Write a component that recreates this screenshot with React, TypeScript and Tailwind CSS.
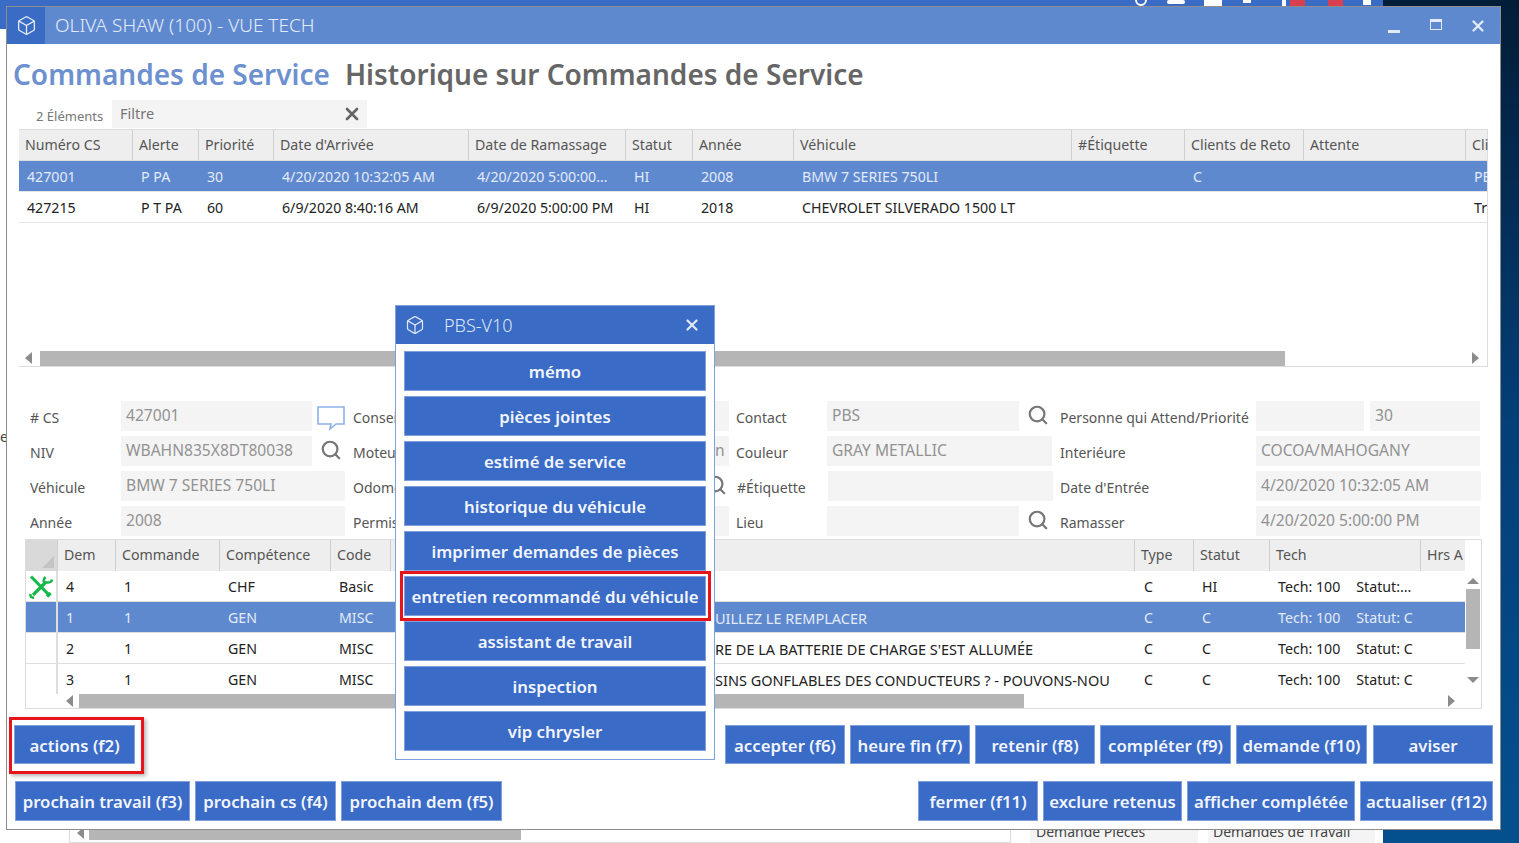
import { Box, Search, X } from "lucide-react";

const font = "font-['Noto_Sans','Liberation_Sans',sans-serif]";

const orderColumns = ["Numéro CS", "Alerte", "Priorité", "Date d'Arrivée", "Date de Ramassage", "Statut", "Année", "Véhicule", "#Étiquette", "Clients de Reto", "Attente", "Cli"];
const orders = [
  { selected: true, cells: ["427001", "P PA", "30", "4/20/2020 10:32:05 AM", "4/20/2020 5:00:00...", "HI", "2008", "BMW 7 SERIES 750LI", "", "C", "", "PE"] },
  { selected: false, cells: ["427215", "P T PA", "60", "6/9/2020 8:40:16 AM", "6/9/2020 5:00:00 PM", "HI", "2018", "CHEVROLET SILVERADO 1500 LT", "", "", "", "Tr"] },
];

const jobColumns = ["Dem", "Commande", "Compétence", "Code", "", "Type", "Statut", "Tech", "Hrs A"];
const jobs = [
  { dem: "4", skill: "CHF", code: "Basic", text: "", status: "HI", tail: "Statut:...", selected: false, tool: true },
  { dem: "1", skill: "GEN", code: "MISC", text: "UILLEZ LE REMPLACER", status: "C", tail: "Statut: C", selected: true, tool: false },
  { dem: "2", skill: "GEN", code: "MISC", text: "RE DE LA BATTERIE DE CHARGE S'EST ALLUMÉE", status: "C", tail: "Statut: C", selected: false, tool: false },
  { dem: "3", skill: "GEN", code: "MISC", text: "SINS GONFLABLES DES CONDUCTEURS ? - POUVONS-NOU", status: "C", tail: "Statut: C", selected: false, tool: false },
];

const menuItems = ["mémo", "pièces jointes", "estimé de service", "historique du véhicule", "imprimer demandes de pièces", "entretien recommandé du véhicule", "assistant de travail", "inspection", "vip chrysler"];

function Arrow({ dir }: { dir: "left" | "right" | "up" | "down" }) {
  const points = {
    left: "9,1 9,13 2,7",
    right: "3,1 3,13 10,7",
    up: "1,9 13,9 7,3",
    down: "1,4 13,4 7,10",
  }[dir];
  return (
    <svg width="14" height="14" viewBox="0 0 14 14" className="shrink-0">
      <polygon points={points} fill="#8c8c8c" />
    </svg>
  );
}

function Field({ value = "", className = "" }: { value?: string; className?: string }) {
  return (
    <div className={`h-[30px] shrink-0 overflow-hidden whitespace-nowrap bg-[#f4f4f4] pl-[5px] pt-[3px] text-[15.6px] leading-[22px] text-[#929292] ${className}`}>
      {value}
    </div>
  );
}

function Label({ text, className = "" }: { text: string; className?: string }) {
  return <div className={`shrink-0 overflow-hidden whitespace-nowrap pt-[6px] text-[14px] leading-[22px] text-[#555] ${className}`}>{text}</div>;
}

function Lens({ className = "" }: { className?: string }) {
  return <Search size={22} strokeWidth={2.4} className={`shrink-0 text-[#777] ${className}`} />;
}

function ActionButton({ label, className = "" }: { label: string; className?: string }) {
  return (
    <button className={`h-full shrink-0 overflow-hidden whitespace-nowrap border border-[#7fa0dd] bg-[#3a6bc7] pt-[2px] text-[16.8px] font-semibold text-[#f2f5fc] ${className}`}>
      {label}
    </button>
  );
}

function App() {
  return (
    <div className={`relative h-[843px] w-[1519px] overflow-hidden bg-white ${font}`}>
      {/* what sits behind the window */}
      <div className="absolute inset-y-0 right-0 w-[136px] bg-gradient-to-b from-[#021d38] via-[#033f78] to-[#04508f]" />
      <div className="absolute left-0 top-0 flex h-[29px] w-[1383px] items-start justify-end bg-[#3a6bc5] pr-[12px]">
        <div className="-mt-[6px] h-[12px] w-[12px] rounded-full border-2 border-white" />
        <div className="ml-[20px] h-[4px] w-[18px] rounded-[2px] bg-white" />
        <div className="ml-[19px] h-[6px] w-[18px] bg-white" />
        <div className="ml-[21px] h-[3px] w-[8px] bg-white" />
        <div className="ml-[31px] h-[6px] w-[4px] bg-white" />
        <div className="ml-[4px] h-[7px] w-[15px] bg-[#d8404f]" />
        <div className="ml-[23px] h-[7px] w-[15px] bg-[#d8404f]" />
        <div className="ml-[20px] h-[5px] w-[8px] bg-white" />
      </div>
      <div className="absolute left-0 top-[430px] text-[14px] leading-none text-[#444]">e</div>
      <div className="absolute left-[69px] top-[820px] flex h-[23px] w-[942px] items-end border border-[#dcdcdc] pb-[2px] pl-[5px]">
        <Arrow dir="left" />
        <div className="h-[10px] w-[432px] bg-[#b5b5b5]" />
      </div>
      <div className="absolute left-[1030px] top-[820px] h-[23px] w-[168px] overflow-hidden bg-[#f4f4f4] pl-[6px] pt-[1px] text-[14px] text-[#444]">Demande Pièces</div>
      <div className="absolute left-[1208px] top-[820px] h-[23px] w-[167px] overflow-hidden bg-[#f4f4f4] pl-[5px] pt-[1px] text-[14px] text-[#444]">Demandes de Travail</div>

      {/* main window */}
      <div className="absolute left-[7px] top-[7px] flex h-[822px] w-[1493px] flex-col bg-white shadow-[0_0_0_1px_#8d8d8d]">
        <div className="flex h-[37px] shrink-0 items-center bg-[#5f89cf] text-[#e4ebf8]">
          <div className="flex h-full w-[38px] items-center justify-center bg-[#3a6bc5]">
            <Box size={21} strokeWidth={1.5} />
          </div>
          <div className="ml-[10px] flex-1 text-[19px] font-light">OLIVA SHAW (100) - VUE TECH</div>
          <div className="mr-[30px] mt-[11px] h-[3px] w-[12px] bg-[#e4ebf8]" />
          <div className="mr-[27px] -mt-[3px] h-[11px] w-[12px] border border-t-[3px] border-[#e4ebf8]" />
          <X size={18} strokeWidth={3} className="mr-[13px]" />
        </div>

        <div className="flex h-[56px] shrink-0 items-center gap-[15px] pl-[6px] pt-[4px] text-[28px] font-semibold">
          <span className="text-[#6d90cf]">Commandes de Service</span>
          <span className="text-[#666]">Historique sur Commandes de Service</span>
        </div>

        <div className="flex h-[29px] shrink-0 items-stretch pl-[29px]">
          <div className="w-[76px] pt-[7px] text-[13px] leading-[18px] text-[#777]">2 Éléments</div>
          <div className="flex h-[28px] w-[255px] items-center justify-between bg-[#f4f4f4] pl-[8px] pr-[5px] text-[14.5px] text-[#777]">
            Filtre
            <X size={20} strokeWidth={3.2} className="text-[#666]" />
          </div>
        </div>

        {/* orders table */}
        <div className="ml-[12px] h-[238px] w-[1469px] shrink-0 border-b border-r border-[#dddddd]">
          <div className="grid h-[32px] grid-cols-[114px_66px_75px_195px_157px_67px_101px_278px_113px_119px_162px_22px] border-b border-t border-[#dcdcdc] bg-[#eeeeee]">
            {orderColumns.map((c) => (
              <div key={c} className="overflow-hidden whitespace-nowrap border-r border-[#cfcfcf] pl-[6px] text-[14.2px] leading-[30px] text-[#555] last:border-r-0">{c}</div>
            ))}
          </div>
          {orders.map((o) => (
            <div key={o.cells[0]} className={`grid h-[31px] grid-cols-[114px_66px_75px_195px_157px_67px_101px_278px_113px_119px_162px_22px] border-b border-[#e4e4e4] ${o.selected ? "bg-[#5f89cf] text-[#e4ebf8]" : "text-[#222]"}`}>
              {o.cells.map((c, i) => (
                <div key={i} className="overflow-hidden whitespace-nowrap pl-[8px] text-[14.2px] leading-[32px]">{c}</div>
              ))}
            </div>
          ))}
          <div className="mt-[127px] flex h-[16px] items-center pl-[4px] pr-[4px]">
            <Arrow dir="left" />
            <div className="ml-[3px] h-[15px] w-[1245px] bg-[#b5b5b5]" />
            <div className="flex-1" />
            <Arrow dir="right" />
          </div>
        </div>

        {/* detail form */}
        <div className="ml-[23px] mt-[34px] flex shrink-0 flex-col gap-[5px]">
          <div className="flex h-[30px]">
            <Label text="# CS" className="w-[91px]" />
            <Field value="427001" className="w-[191px]" />
            <svg width="28" height="26" viewBox="0 0 28 26" className="ml-[5px] mt-[4px] shrink-0"><path d="M1 2h26v17H19l-6 5 1-5H1z" fill="none" stroke="#8db0e6" strokeWidth="1.6" /></svg>
            <Label text="Conseiller" className="ml-[8px] w-[87px]" />
            <Field className="w-[289px]" />
            <Label text="Contact" className="ml-[7px] w-[91px]" />
            <Field value="PBS" className="w-[192px]" />
            <Lens className="ml-[8px] mt-[3px]" />
            <Label text="Personne qui Attend/Priorité" className="ml-[11px] w-[196px]" />
            <Field className="w-[108px]" />
            <Field value="30" className="ml-[6px] w-[110px]" />
          </div>
          <div className="flex h-[30px]">
            <Label text="NIV" className="w-[91px]" />
            <Field value="WBAHN835X8DT80038" className="w-[191px]" />
            <Lens className="ml-[8px] mt-[3px]" />
            <Label text="Moteur" className="ml-[11px] w-[87px]" />
            <Field value="in" className="w-[289px] pl-[271px]" />
            <Label text="Couleur" className="ml-[7px] w-[91px]" />
            <Field value="GRAY METALLIC" className="w-[225px]" />
            <Label text="Interiéure" className="ml-[8px] w-[196px]" />
            <Field value="COCOA/MAHOGANY" className="w-[224px]" />
          </div>
          <div className="flex h-[30px]">
            <Label text="Véhicule" className="w-[91px]" />
            <Field value="BMW 7 SERIES 750LI" className="w-[224px]" />
            <Label text="Odomètre" className="ml-[8px] w-[87px]" />
            <Field className="w-[270px]" />
            <Lens className="-ml-[5px] mt-[3px]" />
            <Label text="#Étiquette" className="ml-[10px] w-[91px]" />
            <Field className="w-[225px]" />
            <Label text="Date d'Entrée" className="ml-[7px] w-[196px]" />
            <Field value="4/20/2020 10:32:05 AM" className="w-[225px]" />
          </div>
          <div className="flex h-[30px]">
            <Label text="Année" className="w-[91px]" />
            <Field value="2008" className="w-[224px]" />
            <Label text="Permis" className="ml-[8px] w-[87px]" />
            <Field className="w-[289px]" />
            <Label text="Lieu" className="ml-[7px] w-[91px]" />
            <Field className="w-[192px]" />
            <Lens className="ml-[8px] mt-[3px]" />
            <Label text="Ramasser" className="ml-[11px] w-[196px]" />
            <Field value="4/20/2020 5:00:00 PM" className="w-[224px]" />
          </div>
        </div>

        {/* jobs table */}
        <div className="ml-[18px] mt-[3px] h-[170px] w-[1457px] shrink-0 border border-[#dcdcdc]">
          <div className="flex h-[154px]">
            <div className="w-[1439px] shrink-0 overflow-hidden">
              <div className="grid h-[31px] grid-cols-[32px_58px_104px_111px_60px_744px_59px_76px_151px_44px] bg-[#eeeeee]">
                <div className="relative border-r border-[#cfcfcf] bg-[#d9d9d9]">
                  <div className="absolute bottom-[3px] right-[3px] h-0 w-0 border-b-[12px] border-l-[12px] border-b-[#c4c4c4] border-l-transparent" />
                </div>
                {jobColumns.map((c, i) => (
                  <div key={i} className="overflow-hidden whitespace-nowrap border-r border-[#cfcfcf] pl-[6px] text-[14.2px] leading-[30px] text-[#555] last:border-r-0">{c}</div>
                ))}
              </div>
              {jobs.map((j) => (
                <div key={j.dem} className={`grid h-[31px] grid-cols-[32px_58px_104px_111px_60px_744px_59px_76px_229px] border-b border-[#dedede] text-[14.2px] leading-[32px] ${j.selected ? "bg-[#5f89cf] text-[#e4ebf8]" : "text-[#222]"}`}>
                  <div className="flex items-center justify-center border-r-2 border-[#dedede]">
                    {j.tool && (
                      <svg width="26" height="26" viewBox="0 0 26 26" fill="none" stroke="#17b84b">
                        {/* screwdriver, upper left to lower right */}
                        <path d="M3 2.500 21 21" strokeWidth="3.200" />
                        <path d="M19 22.500 22.500 19" strokeWidth="3.500" />
                        {/* wrench, lower left to upper right */}
                        <path d="M5 21 18 8" strokeWidth="3.200" />
                        <path d="M17.500 3c-2.500 2.500-2.500 5.500 .5 5.500s5.500 .5 6-3" strokeWidth="2.600" />
                        <path d="M2.500 20c-.5 2.500 1 4 3.500 3.500" strokeWidth="2.600" />
                      </svg>
                    )}
                  </div>
                  <div className="pl-[8px]">{j.dem}</div>
                  <div className="pl-[8px]">1</div>
                  <div className="pl-[8px]">{j.skill}</div>
                  <div className="pl-[8px]">{j.code}</div>
                  <div className="overflow-hidden whitespace-nowrap pl-[324px] text-[14.5px]">{j.text}</div>
                  <div className="pl-[9px]">C</div>
                  <div className="pl-[8px]">{j.status}</div>
                  <div className="flex gap-[16px] whitespace-nowrap pl-[8px]">
                    <span>Tech: 100</span>
                    <span>{j.tail}</span>
                  </div>
                </div>
              ))}
            </div>
            <div className="flex w-[16px] shrink-0 flex-col items-center pt-[35px]">
              <Arrow dir="up" />
              <div className="h-[60px] w-[14px] bg-[#b5b5b5]" />
              <div className="mt-[24px]"><Arrow dir="down" /></div>
            </div>
          </div>
          <div className="flex h-[14px] items-center pl-[38px] pr-[22px]">
            <Arrow dir="left" />
            <div className="ml-[1px] h-[14px] w-[945px] bg-[#b5b5b5]" />
            <div className="flex-1" />
            <Arrow dir="right" />
          </div>
        </div>

        {/* bottom buttons */}
        <div className="mt-[16px] flex h-[39px] shrink-0 justify-between pl-[7px] pr-[7px]">
          <div className="relative h-full">
            <ActionButton label="actions (f2)" className="w-[121px]" />
            <div className="absolute -bottom-[10px] -left-[5px] -right-[9px] -top-[8px] border-[3px] border-[#e8141c] shadow-[2px_2px_4px_rgba(0,0,0,0.3)]" />
          </div>
          <div className="flex gap-[5px]">
            <ActionButton label="accepter (f6)" className="w-[120px]" />
            <ActionButton label="heure fin (f7)" className="w-[120px]" />
            <ActionButton label="retenir (f8)" className="w-[120px]" />
            <ActionButton label="compléter (f9)" className="w-[131px]" />
            <ActionButton label="demande (f10)" className="w-[131px]" />
            <ActionButton label="aviser" className="ml-[1px] w-[120px]" />
          </div>
        </div>
        <div className="mt-[17px] flex h-[40px] shrink-0 justify-between pl-[8px] pr-[7px]">
          <div className="flex gap-[5px]">
            <ActionButton label="prochain travail (f3)" className="w-[175px]" />
            <ActionButton label="prochain cs (f4)" className="w-[141px]" />
            <ActionButton label="prochain dem (f5)" className="w-[161px]" />
          </div>
          <div className="flex gap-[5px]">
            <ActionButton label="fermer (f11)" className="w-[120px]" />
            <ActionButton label="exclure retenus" className="w-[139px]" />
            <ActionButton label="afficher complétée" className="w-[168px]" />
            <ActionButton label="actualiser (f12)" className="w-[133px]" />
          </div>
        </div>
      </div>

      {/* actions popup */}
      <div className="absolute left-[395px] top-[305px] flex h-[455px] w-[320px] flex-col border border-[#7fa0dd] bg-white">
        <div className="flex h-[38px] shrink-0 items-center bg-[#3a6bc5] text-[#dfe7f6]">
          <Box size={20} strokeWidth={1.5} className="ml-[9px]" />
          <span className="ml-[19px] flex-1 text-[18px] font-light">PBS-V10</span>
          <X size={18} strokeWidth={3} className="mr-[13px]" />
        </div>
        <div className="flex flex-col gap-[5px] pl-[8px] pt-[7px]">
          {menuItems.map((item, i) => (
            <div key={item} className="relative h-[40px] w-[302px]">
              <ActionButton label={item} className="w-[302px]" />
              {i === 5 && <div className="absolute -bottom-[5px] -left-[4px] -right-[5px] -top-[5px] border-[3px] border-[#e8141c]" />}
            </div>
          ))}
        </div>
      </div>
    </div>
  );
}

export default App;
